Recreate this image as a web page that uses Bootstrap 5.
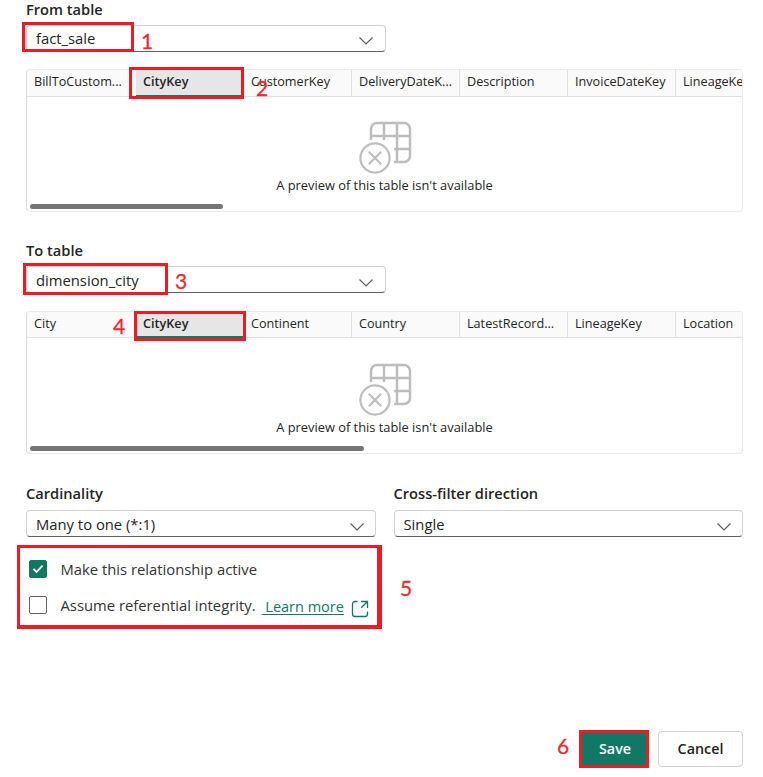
<!DOCTYPE html>
<html lang="en">
<head>
<meta charset="utf-8">
<meta name="viewport" content="width=device-width, initial-scale=1">
<title>New relationship</title>
<link href="https://cdn.jsdelivr.net/npm/bootstrap@5.3.0/dist/css/bootstrap.min.css" rel="stylesheet">
<style>
body{font-family:"Open Sans","Noto Sans",sans-serif;color:#242424;background:#fff;overflow:hidden}
.pane{width:763px;height:777px;padding:0 20px 0 26px;overflow:hidden}
.field-title{font-size:14.65px;font-weight:600;line-height:18px;height:20px;white-space:nowrap}
.picker{height:27px;border:1px solid #d1d1d1;border-bottom-color:#616161;border-radius:4px;padding:0 11px 0 9px;font-size:14.8px;line-height:25px;white-space:nowrap;background:#fff}
.picker svg{margin-top:5px}
.half .picker svg{margin-right:-1px;margin-top:7px}
.to-picker svg{margin-top:7px}
.to-picker span,.half .picker span{padding-top:2px}
.w-table{width:360px}
.preview{flex:none;height:143px;border:1px solid #ebebeb;border-left-color:#dcdcdc;border-radius:4px;overflow:hidden}
.heads{height:27px;background:#fafafa;border-bottom:1px solid #e0e0e0}
.to-preview .heads{height:26px}
.head-cell{flex:0 0 108px;border-right:1px solid #e0e0e0;padding-left:7px;font-size:12.65px;line-height:23px;white-space:nowrap}
.head-cell:first-child{flex-basis:109px}
.head-cell:first-child,.head-cell.chosen{border-right-color:transparent}
.head-cell.chosen{background:#e6e6e6;font-weight:600;border-bottom:2px solid #117865;margin-bottom:-1px}
.empty-note{font-size:12.85px;line-height:18px;margin-top:1px}
.thumb{height:5px;border-radius:3px;background:#757575;margin:0 0 2px 3px}
.tick{width:18px;height:18px;border:1px solid #616161;border-radius:2px;flex:none}
.tick.on{background:#117865;border-color:#117865}
.option{height:36px;font-size:14.8px;line-height:20px;padding-left:3px;color:#333}
.learn{color:#117865;text-decoration:underline;text-underline-offset:2px}
.act{height:36px;font-size:14.3px;font-weight:600;border-radius:4px;padding:0;line-height:34px}
.save{width:68px;background:#117865;color:#fff;border:0}
.cancel{width:85px;border:1px solid #d1d1d1;color:#242424}
.from-picker,.to-picker{margin-top:5px}
.from-preview{margin-top:17px}
.to-title{margin-top:29px}
.to-preview{margin-top:18px}
.art{padding-top:24px}
.to-preview .art{padding-top:25px}
.art svg{margin-left:2px}
.thumb-from{width:193px}
.thumb-to{width:334px}
.pair{margin-top:30px;gap:18px}
.half{flex:1 1 0}
.half .picker{margin-top:6px}
.options{margin-top:14px}
.opt-text{margin-left:13.5px}
.learn{margin-left:6px;margin-top:4px;font-size:14.5px}
.ext{margin-left:7px;margin-top:7px}
.actions{margin-top:108px;gap:9px}
.frame{position:absolute;border:3px solid #ed1c24;pointer-events:none}
.num{position:absolute;font-family:Lato,sans-serif;font-size:21px;line-height:24px;width:14px;text-align:center;color:#ed2a32;-webkit-text-stroke:.3px #ed2a32}
.f1{left:22px;top:22px;width:112px;height:30px}
.f2{left:129px;top:67px;width:115px;height:32px}
.f3{left:23px;top:263px;width:145px;height:32px}
.f4{left:134px;top:311px;width:112px;height:30px}
.f5{left:17px;top:545px;width:365px;height:84px;border-right-width:5px;border-bottom-width:4px}
.f6{left:579px;top:730px;width:70px;height:38px}
.n1{left:140px;top:29px}.n2{left:255px;top:76px}.n3{left:174px;top:269px}
.n4{left:112px;top:314px}.n5{left:399px;top:576px}.n6{left:556px;top:734px}
</style>
<script src="https://cdn.jsdelivr.net/npm/bootstrap@5.3.0/dist/js/bootstrap.bundle.min.js"></script>
</head>
<body>
<svg class="d-none">
  <symbol id="chev" viewBox="0 0 16 10"><path d="M1.500 1.500 8 8l6.500-6.500" fill="none" stroke="#616161" stroke-width="1.200"/></symbol>
  <symbol id="notable" viewBox="0 0 54 54"><g fill="none" stroke="#bdbdbd" stroke-width="2.500"><path d="M12 19V8a6 6 0 0 1 6-6h27a6 6 0 0 1 6 6v27a6 6 0 0 1-6 6H35M12 15H51M25 2v17M38 2v39M35 28h16"/><circle cx="16" cy="37" r="14.600" stroke-width="2.200"/><path d="m9.800 30.800 12.400 12.400m0-12.400L9.800 43.200" stroke-width="2.200"/></g></symbol>
</svg>
<main class="pane position-relative d-flex flex-column">
  <div class="field-title">From table</div>
  <div class="picker w-table d-flex justify-content-between align-items-center from-picker"><span>fact_sale</span><svg width="16" height="10"><use href="#chev"/></svg></div>
  <section class="preview d-flex flex-column from-preview">
    <div class="heads d-flex">
      <div class="head-cell">BillToCustom...</div><div class="head-cell chosen">CityKey</div><div class="head-cell">CustomerKey</div><div class="head-cell">DeliveryDateK...</div><div class="head-cell">Description</div><div class="head-cell">InvoiceDateKey</div><div class="head-cell">LineageKey</div>
    </div>
    <div class="flex-grow-1 d-flex flex-column align-items-center art"><svg width="54" height="54"><use href="#notable"/></svg><div class="empty-note">A preview of this table isn't available</div></div>
    <div class="thumb thumb-from"></div>
  </section>
  <div class="field-title to-title">To table</div>
  <div class="picker w-table d-flex justify-content-between align-items-center to-picker"><span>dimension_city</span><svg width="16" height="10"><use href="#chev"/></svg></div>
  <section class="preview d-flex flex-column to-preview">
    <div class="heads d-flex">
      <div class="head-cell">City</div><div class="head-cell chosen">CityKey</div><div class="head-cell">Continent</div><div class="head-cell">Country</div><div class="head-cell">LatestRecord...</div><div class="head-cell">LineageKey</div><div class="head-cell">Location</div>
    </div>
    <div class="flex-grow-1 d-flex flex-column align-items-center art"><svg width="54" height="54"><use href="#notable"/></svg><div class="empty-note">A preview of this table isn't available</div></div>
    <div class="thumb thumb-to"></div>
  </section>
  <div class="d-flex pair">
    <div class="half"><div class="field-title">Cardinality</div><div class="picker d-flex justify-content-between align-items-center"><span>Many to one (*:1)</span><svg width="16" height="10"><use href="#chev"/></svg></div></div>
    <div class="half"><div class="field-title">Cross-filter direction</div><div class="picker d-flex justify-content-between align-items-center"><span>Single</span><svg width="16" height="10"><use href="#chev"/></svg></div></div>
  </div>
  <div class="options">
    <div class="option d-flex align-items-center"><span class="tick on d-flex align-items-center justify-content-center"><svg width="12" height="10" viewBox="0 0 12 10"><path d="m1.500 5 3 3 6-6.300" fill="none" stroke="#fff" stroke-width="1.800"/></svg></span><span class="opt-text">Make this relationship active</span></div>
    <div class="option d-flex align-items-center"><span class="tick"></span><span class="opt-text">Assume referential integrity.</span><a class="learn" href="#">&nbsp;Learn more</a><svg class="ext" width="18" height="18" viewBox="0 0 18 18"><path d="M6.500 1.500H4A2.500 2.500 0 0 0 1.500 4v10A2.500 2.500 0 0 0 4 16.500h10a2.500 2.500 0 0 0 2.500-2.500v-2.500M10 1.500h6.500V8M16.500 1.500l-6.300 6.300" fill="none" stroke="#117865" stroke-width="1.300"/></svg></div>
  </div>
  <div class="d-flex justify-content-end actions"><button class="btn act save">Save</button><button class="btn act cancel">Cancel</button></div>

  <div class="frame f1"></div><div class="frame f2"></div><div class="frame f3"></div><div class="frame f4"></div><div class="frame f5"></div><div class="frame f6"></div>
  <div class="num n1">1</div><div class="num n2">2</div><div class="num n3">3</div><div class="num n4">4</div><div class="num n5">5</div><div class="num n6">6</div>
</main>
</body>
</html>
